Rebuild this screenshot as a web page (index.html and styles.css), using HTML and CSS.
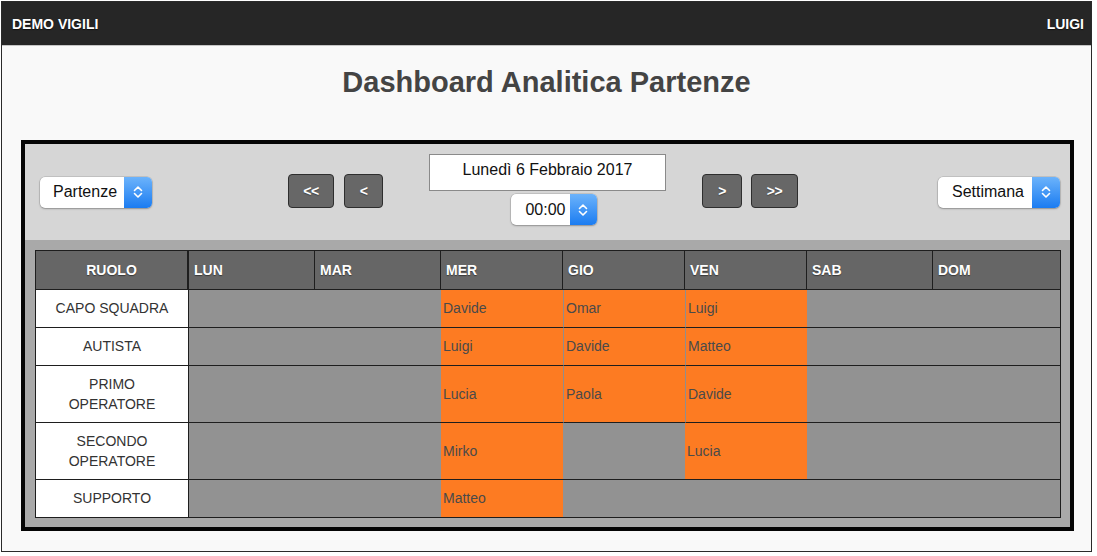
FILE: index.html
```html
<!DOCTYPE html>
<html lang="it">
<head>
<meta charset="utf-8">
<title>Dashboard Analitica Partenze</title>
<link rel="stylesheet" href="styles.css">
</head>
<body>
<div class="frame">
  <header class="topbar">
    <span class="brand">DEMO VIGILI</span>
    <span class="user">LUIGI</span>
  </header>

  <h1 class="title">Dashboard Analitica Partenze</h1>

  <section class="panel">
    <div class="controls">
      <div class="select">
        <span class="select-label">Partenze</span>
        <span class="stepper"><svg width="12" height="18" viewBox="0 0 12 18"><path d="M2.5 7.5 L6 4 L9.5 7.5 M2.5 10.5 L6 14 L9.5 10.5" fill="none" stroke="#fff" stroke-width="1.6" stroke-linecap="round" stroke-linejoin="round"/></svg></span>
      </div>

      <div class="nav">
        <div class="btn-group left">
          <button class="btn btn-wide">&lt;&lt;</button>
          <button class="btn btn-narrow">&lt;</button>
        </div>
        <div class="date-col">
          <div class="date-box">Lunedì 6 Febbraio 2017</div>
          <div class="select select-time">
            <span class="select-label label-time">00:00</span>
            <span class="stepper stepper-time"><svg width="12" height="18" viewBox="0 0 12 18"><path d="M2.5 7.5 L6 4 L9.5 7.5 M2.5 10.5 L6 14 L9.5 10.5" fill="none" stroke="#fff" stroke-width="1.6" stroke-linecap="round" stroke-linejoin="round"/></svg></span>
          </div>
        </div>
        <div class="btn-group right">
          <button class="btn btn-narrow2">&gt;</button>
          <button class="btn btn-wide2">&gt;&gt;</button>
        </div>
      </div>

      <div class="select">
        <span class="select-label label-wide">Settimana</span>
        <span class="stepper"><svg width="12" height="18" viewBox="0 0 12 18"><path d="M2.5 7.5 L6 4 L9.5 7.5 M2.5 10.5 L6 14 L9.5 10.5" fill="none" stroke="#fff" stroke-width="1.6" stroke-linecap="round" stroke-linejoin="round"/></svg></span>
      </div>
    </div>

    <div class="table-wrap">
      <div class="grid">
        <div class="th th-role">RUOLO</div>
        <div class="th">LUN</div>
        <div class="th">MAR</div>
        <div class="th">MER</div>
        <div class="th">GIO</div>
        <div class="th">VEN</div>
        <div class="th">SAB</div>
        <div class="th th-last">DOM</div>

        <div class="cell role">CAPO SQUADRA</div>
        <div class="cell off span2"></div>
        <div class="cell on">Davide</div>
        <div class="cell on join">Omar</div>
        <div class="cell on join">Luigi</div>
        <div class="cell off span2"></div>

        <div class="cell role">AUTISTA</div>
        <div class="cell off span2"></div>
        <div class="cell on">Luigi</div>
        <div class="cell on join">Davide</div>
        <div class="cell on join">Matteo</div>
        <div class="cell off span2"></div>

        <div class="cell role">PRIMO<br>OPERATORE</div>
        <div class="cell off span2"></div>
        <div class="cell on">Lucia</div>
        <div class="cell on join">Paola</div>
        <div class="cell on join">Davide</div>
        <div class="cell off span2"></div>

        <div class="cell role">SECONDO<br>OPERATORE</div>
        <div class="cell off span2"></div>
        <div class="cell on">Mirko</div>
        <div class="cell off"></div>
        <div class="cell on">Lucia</div>
        <div class="cell off span2"></div>

        <div class="cell role end">SUPPORTO</div>
        <div class="cell off span2 end"></div>
        <div class="cell on end">Matteo</div>
        <div class="cell off span4 end"></div>
      </div>
    </div>
  </section>
</div>
</body>
</html>
```

FILE: styles.css
```css
* {
  box-sizing: border-box;
}

body {
  margin: 0;
  background: #ffffff;
  font-family: "Liberation Sans", Arial, sans-serif;
}

.frame {
  margin: 1px 0 0 1px;
  width: 1091px;
  height: 551px;
  border: 1px solid #2a2a2a;
  background: #f9f9f9;
}

.topbar {
  height: 44px;
  background: #262626;
  border-bottom: 1px solid #c6c6c6;
  display: flex;
  justify-content: space-between;
  align-items: center;
  padding: 0 7px 0 10px;
  color: #ffffff;
  font-weight: bold;
  font-size: 14px;
  text-shadow: 0 1px 1px rgba(0, 0, 0, 0.6);
}

.title {
  margin: 19px 0 0;
  text-align: center;
  font-size: 29px;
  line-height: 34px;
  font-weight: bold;
  color: #444444;
}

.panel {
  margin: 41px 0 0 19px;
  width: 1053px;
  border: 4px solid #050505;
}

.controls {
  height: 96px;
  background: #d6d6d6;
  display: flex;
  align-items: center;
  justify-content: space-between;
  padding: 0 10px 0 15px;
}

.select {
  display: inline-flex;
  align-items: stretch;
  height: 31px;
  background: #ffffff;
  border-radius: 5px;
  box-shadow: 0 0 0 0.5px rgba(0, 0, 0, 0.18), 0 1px 2px rgba(0, 0, 0, 0.25);
  font-size: 16px;
  color: #111111;
}

.select-label {
  display: flex;
  align-items: center;
  padding: 0 7px 0 13px;
}

.label-wide {
  padding: 0 8px 0 14px;
}

.label-time {
  padding: 0 4px 0 14px;
}

.stepper {
  width: 28px;
  display: flex;
  align-items: center;
  justify-content: center;
  background: linear-gradient(#6cb3fb, #1b7cf1);
  border-radius: 0 5px 5px 0;
}

.stepper-time {
  width: 27px;
}

.nav {
  display: flex;
  align-items: center;
  margin-right: 4px;
}

.btn-group {
  display: flex;
  align-items: center;
  margin-top: -2px;
}

.btn-group.left {
  gap: 10px;
  margin-right: 46px;
}

.btn-group.right {
  gap: 9px;
  margin-left: 36px;
}

.btn {
  height: 34px;
  padding: 0;
  background: #676767;
  border: 1px solid #2e2e2e;
  border-radius: 4px;
  color: #ffffff;
  font-family: "Liberation Sans", Arial, sans-serif;
  font-weight: bold;
  font-size: 14px;
  letter-spacing: -0.5px;
  text-shadow: 0 1px 1px rgba(0, 0, 0, 0.35);
}

.btn-wide {
  width: 46px;
}

.btn-narrow {
  width: 39px;
}

.btn-narrow2 {
  width: 40px;
}

.btn-wide2 {
  width: 47px;
}

.date-col {
  display: flex;
  flex-direction: column;
  align-items: center;
  margin-bottom: 5px;
}

.date-box {
  width: 237px;
  height: 37px;
  background: #ffffff;
  border: 1px solid #8a8a8a;
  font-size: 16px;
  line-height: 30px;
  text-align: center;
  color: #111111;
}

.select-time {
  margin-top: 3px;
  margin-left: 13px;
}

.table-wrap {
  background: #a9a9a9;
  padding: 10px 9px 9px 10px;
}

.grid {
  display: grid;
  grid-template-columns: 153px 126px 126px 122px 122px 122px 126px 127px;
  grid-template-rows: 39px 38px 38px 57px 57px 37px;
  border: 1px solid #1e1e1e;
}

.th {
  display: flex;
  align-items: center;
  padding-left: 5px;
  padding-bottom: 1px;
  background: #666666;
  color: #ffffff;
  font-weight: bold;
  font-size: 14px;
  text-shadow: 0 1px 1px rgba(0, 0, 0, 0.45);
  border-right: 1px solid #1e1e1e;
  border-bottom: 1px solid #1e1e1e;
}

.th-role {
  justify-content: center;
  padding-left: 0;
  border-right-width: 2px;
}

.th-last {
  border-right: none;
}

.cell {
  display: flex;
  align-items: center;
  font-size: 14px;
  padding-bottom: 1px;
  border-bottom: 1px solid #1e1e1e;
}

.cell.end {
  border-bottom: none;
}

.role {
  justify-content: center;
  text-align: center;
  background: #ffffff;
  color: #333333;
  line-height: 20px;
  border-right: 1px solid #1e1e1e;
}

.off {
  background: #929292;
}

.on {
  background: #fd7b22;
  color: #4a4a4a;
  padding-left: 2px;
}

.on.join {
  border-left: 1px solid #8e8e8e;
}

.span2 {
  grid-column: span 2;
}

.span4 {
  grid-column: span 4;
}
```
